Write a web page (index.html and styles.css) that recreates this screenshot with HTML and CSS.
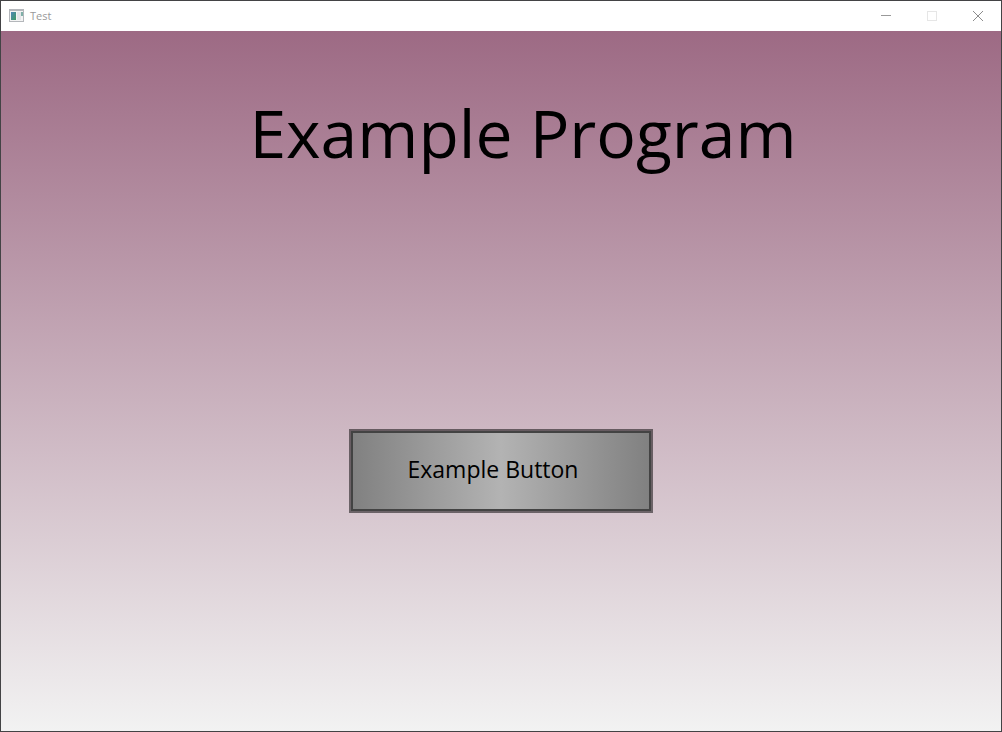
FILE: index.html
```html
<!DOCTYPE html>
<html lang="en">
<head>
<meta charset="utf-8">
<title>Test</title>
<link rel="stylesheet" href="styles.css">
</head>
<body>
<div class="window">
  <header class="titlebar">
    <svg class="app-icon" width="16" height="14" viewBox="0 0 16 14" aria-hidden="true">
      <defs>
        <linearGradient id="pane" x1="0" y1="0" x2="1" y2="1">
          <stop offset="0" stop-color="#4f86b8"/>
          <stop offset="1" stop-color="#3f9a62"/>
        </linearGradient>
      </defs>
      <rect x="0.5" y="0.5" width="14" height="12" fill="#f4f4f4" stroke="#b4b7bb"/>
      <path d="M0 1h15" stroke="#b4b7bb" stroke-width="2"/>
      <rect x="2" y="3" width="5" height="8" fill="url(#pane)"/>
      <rect x="8" y="3" width="4" height="8" fill="#e3e5e8"/>
      <rect x="12" y="3" width="2" height="4" fill="#7fb0a8"/>
    </svg>
    <span class="caption">Test</span>
    <div class="controls">
      <button class="control" type="button" aria-label="Minimize">
        <svg width="10" height="10" viewBox="0 0 10 10"><path d="M0 4.5h10" stroke="#999"/></svg>
      </button>
      <button class="control" type="button" aria-label="Maximize" disabled>
        <svg width="10" height="10" viewBox="0 0 10 10"><rect x="0.5" y="0.5" width="9" height="9" fill="none" stroke="#e6e6e6"/></svg>
      </button>
      <button class="control" type="button" aria-label="Close">
        <svg width="10" height="10" viewBox="0 0 10 10"><path d="M0 0l10 10M10 0L0 10" stroke="#8c8c8c"/></svg>
      </button>
    </div>
  </header>
  <main class="content">
    <h1 class="title">Example Program</h1>
    <button class="action" type="button">Example Button</button>
  </main>
</div>
</body>
</html>
```
FILE: styles.css
```css
* { box-sizing: border-box; }

body {
  margin: 0;
  font-family: "Open Sans", "Noto Sans", sans-serif;
  color: #000;
}

.window {
  display: flex;
  flex-direction: column;
  min-height: 100vh;
  border: 1px solid #434345;
}

.titlebar {
  display: flex;
  align-items: center;
  height: 30px;
  padding-left: 8px;
  background: #fff;
}

.app-icon { flex: none; }

.caption {
  margin-left: 5px;
  font-size: 11px;
  line-height: 16px;
  color: #999;
}

.controls {
  display: flex;
  margin-left: auto;
}

.control {
  display: flex;
  align-items: center;
  justify-content: center;
  width: 46px;
  height: 30px;
  padding: 0;
  border: 0;
  background: none;
}

.content {
  flex: 1;
  display: flex;
  flex-direction: column;
  align-items: center;
  padding-top: 55px;
  background: linear-gradient(#9d6a84, #f2f2f2);
}

.title {
  margin: 0;
  padding-left: 44px;
  font-size: 66px;
  line-height: 92px;
  font-weight: 400;
}

.action {
  width: 304px;
  height: 84px;
  margin-top: 251px;
  padding: 0 16px 4px 0;
  border: 2px solid rgba(0, 0, 0, 0.5);
  outline: 2px solid #434343;
  outline-offset: -4px;
  background: linear-gradient(90deg, #808080, #b3b3b3 50%, #808080) padding-box;
  font: inherit;
  font-size: 23px;
  line-height: 32px;
}
```
